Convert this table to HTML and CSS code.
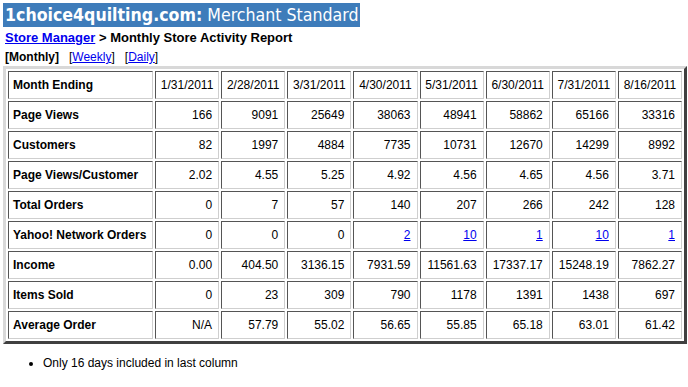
FILE: index.html
```html
<!DOCTYPE html>
<html>
<head>
<meta charset="utf-8">
<link rel="stylesheet" href="styles.css">
</head>
<body>
<div class="titlebar"><b>1choice4quilting.com:</b> Merchant Standard</div>
<div class="crumb"><a href="#">Store Manager</a> &gt; Monthly Store Activity Report</div>
<div class="tabs"><b>[Monthly]</b><span>[<a href="#">Weekly</a>]</span><span>[<a href="#">Daily</a>]</span></div>
<table class="report">
<colgroup><col class="labelcol"><col><col><col><col><col><col><col><col></colgroup>
<tr><th>Month Ending</th><td class="c">1/31/2011</td><td class="c">2/28/2011</td><td class="c">3/31/2011</td><td class="c">4/30/2011</td><td class="c">5/31/2011</td><td class="c">6/30/2011</td><td class="c">7/31/2011</td><td class="c">8/16/2011</td></tr>
<tr><th>Page Views</th><td>166</td><td>9091</td><td>25649</td><td>38063</td><td>48941</td><td>58862</td><td>65166</td><td>33316</td></tr>
<tr><th>Customers</th><td>82</td><td>1997</td><td>4884</td><td>7735</td><td>10731</td><td>12670</td><td>14299</td><td>8992</td></tr>
<tr><th>Page Views/Customer</th><td>2.02</td><td>4.55</td><td>5.25</td><td>4.92</td><td>4.56</td><td>4.65</td><td>4.56</td><td>3.71</td></tr>
<tr><th>Total Orders</th><td>0</td><td>7</td><td>57</td><td>140</td><td>207</td><td>266</td><td>242</td><td>128</td></tr>
<tr><th>Yahoo! Network Orders</th><td>0</td><td>0</td><td>0</td><td><a href="#">2</a></td><td><a href="#">10</a></td><td><a href="#">1</a></td><td><a href="#">10</a></td><td><a href="#">1</a></td></tr>
<tr><th>Income</th><td>0.00</td><td>404.50</td><td>3136.15</td><td>7931.59</td><td>11561.63</td><td>17337.17</td><td>15248.19</td><td>7862.27</td></tr>
<tr><th>Items Sold</th><td>0</td><td>23</td><td>309</td><td>790</td><td>1178</td><td>1391</td><td>1438</td><td>697</td></tr>
<tr><th>Average Order</th><td>N/A</td><td>57.79</td><td>55.02</td><td>56.65</td><td>55.85</td><td>65.18</td><td>63.01</td><td>61.42</td></tr>
</table>
<ul class="notes"><li>Only 16 days included in last column</li></ul>
</body>
</html>
```
FILE: styles.css
```css
html, body { background: #fff; }
body {
  margin: 3px 1px 0 3px;
  font-family: "Liberation Sans", Arial, sans-serif;
  font-size: 12px;
  color: #000;
}
a { color: #0000ee; text-decoration: underline; }
.titlebar {
  display: inline-block;
  background: #3e7cba;
  color: #fff;
  font-family: "DejaVu Sans Condensed", "DejaVu Sans", Verdana, sans-serif;
  font-stretch: condensed;
  font-size: 17.6px;
  line-height: 24px;
  height: 24px;
  padding: 0 2px 0 2px;
  white-space: nowrap;
}
.crumb {
  font-weight: bold;
  font-size: 13px;
  line-height: 16px;
  margin-top: 3px;
  padding-left: 2px;
}
.crumb a { color: #0000ee; }
.tabs {
  display: flex;
  gap: 10px;
  font-size: 12px;
  line-height: 15px;
  margin-top: 4px;
  padding-left: 2px;
}
.report {
  margin-top: 1px;
  width: 684px;
  table-layout: fixed;
  border-collapse: separate;
  border-spacing: 2px;
  border-style: solid;
  border-width: 3px;
  border-color: #d8d8d8 #404040 #404040 #d8d8d8;
}
.labelcol { width: 145px; }
.report th, .report td {
  height: 26px;
  padding: 0 5px 0 4px;
  border-style: solid;
  border-width: 1px;
  border-color: #555 #cfcfcf #cfcfcf #555;
  font-size: 12px;
  white-space: nowrap;
  box-sizing: border-box;
}
.report tr { height: 28px; }
.report th { text-align: left; font-weight: bold; }
.report td { text-align: right; padding-right: 6px; }
.report td.c { text-align: center; padding: 0 2px; }
.notes {
  margin: 12px 0 0 0;
  padding-left: 40px;
  font-size: 12px;
  line-height: 15px;
}
```
